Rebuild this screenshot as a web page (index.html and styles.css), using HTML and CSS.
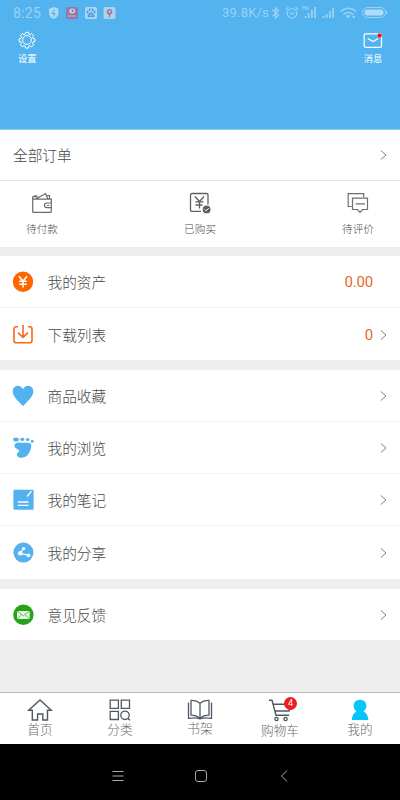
FILE: index.html
```
<!DOCTYPE html>
<html lang="zh-CN">
<head>
<meta charset="utf-8">
<meta name="viewport" content="width=device-width, initial-scale=1">
<title>我的</title>
<link rel="stylesheet" href="styles.css">
</head>
<body>
<svg class="defs" width="0" height="0"><symbol id="chevron" viewBox="0 0 7 10"><path d="M.8.5 6 5 .8 9.5" fill="none" stroke="#808080"/></symbol></svg>
<header class="hero">
  <div class="status">
    <span class="clock">8:25</span>
    <svg class="apps" width="68" height="14" viewBox="0 0 68 14">
      <path d="M5.700 1 10.500 2.800V7c0 3-2 5-4.800 6C2.900 12 1 10 1 7V2.800Z" fill="#a9d9f6"/>
      <path d="M6.600 3.500 4 7.500h3L5.300 10.500" stroke="#52a8df" fill="none"/>
      <rect x="18" y="1" width="12" height="12" rx="2" fill="#9378a8"/>
      <ellipse cx="24.200" cy="5" rx="3" ry="2.500" fill="#c3d5e8"/><circle cx="24.500" cy="4.700" r="1" fill="#765a8a"/><path d="M20 10h8" stroke="#c7acc9" stroke-width="1.500" stroke-dasharray="1.500 .5"/>
      <rect x="37" y="1" width="12" height="12" rx="2" fill="#a9d8f7"/>
      <g fill="#4b9be0"><ellipse cx="39.500" cy="6" rx="1" ry="1.400"/><ellipse cx="41.700" cy="3.800" rx="1" ry="1.400"/><ellipse cx="44.500" cy="3.800" rx="1" ry="1.400"/><ellipse cx="46.500" cy="6" rx="1" ry="1.400"/><path d="M43 6.200c1.300 0 3.700 2.400 3.500 4-.2 1.200-2 .9-3.500.9s-3.300.3-3.500-.9c-.2-1.600 2.200-4 3.500-4Z"/></g><path d="M41.500 9h3" stroke="#a9d8f7"/>
      <rect x="55.500" y="1" width="12" height="12" rx="2" fill="#add2ea"/>
      <circle cx="61.500" cy="5.700" r="2.800" fill="#97819f"/><circle cx="61.500" cy="5.500" r="1" fill="#c8d9e9"/><path d="M61.500 8v3.500" stroke="#97819f" stroke-width="1.200"/>
    </svg>
    <span class="speed">39.8K/s</span>
    <svg class="signals" width="119" height="16" viewBox="270 5 119 16" fill="none" stroke="#9ad2f6">
      <path d="m272.500 9.500 6 6-3 2.500V8l3 2.500-6 6" stroke-width="1.300"/>
      <circle cx="292" cy="13.300" r="4.800" stroke-width="1.200"/><path d="m286 9.500 2.500-2.500m9.500 2.500-2.500-2.500M290 12.200l2 2 2.500-2" stroke-width="1.200"/>
      <g stroke-width="1.800"><path d="M305.500 18v-2m3.200 2v-5m3.200 5v-8m3.200 8V7M323.500 18v-2m3.200 2v-4m3.200 4v-7m3.200 7V8"/></g>
      <text x="302" y="10" class="hd">HD</text>
      <path d="M340.500 11.500q7.800-6.500 15.500 0M343.300 14.500q5-4 10 0" stroke-width="1.600"/><path d="m345.500 15.800 2.500 2.700 2.500-2.700q-2.500-1.700-5 0Z" fill="#9ad2f6" stroke="none"/><circle cx="353.800" cy="17" r="1.300" fill="#9ad2f6" stroke="none"/>
      <rect x="362.500" y="7.500" width="23" height="10" rx="5"/><rect x="364.500" y="9.500" width="19" height="6" rx="3" fill="#b0dcfa" stroke="none"/><path d="M386.500 11v3"/>
    </svg>
  </div>
  <div class="actions">
    <a class="action">
      <svg width="18" height="18" viewBox="0 0 18 18" fill="none" stroke="#fff"><circle cx="9" cy="9" r="4.400"/><path d="M7.600 1.300h2.800l.4 1.900 1.200.5 1.700-1.100 1.900 1.900-1.100 1.700.5 1.200 1.900.4v2.800l-1.900.4-.5 1.200 1.100 1.700-1.900 1.900-1.700-1.100-1.200.5-.4 1.900H7.600l-.4-1.900-1.200-.5-1.700 1.100-1.900-1.900 1.100-1.700-.5-1.200-1.900-.4V7.800L3 7.400l.5-1.200-1.100-1.700 1.900-1.900L6 3.700l1.200-.5Z"/></svg>
      <span>设置</span>
    </a>
    <a class="action">
      <svg width="20" height="18" viewBox="0 0 20 18" fill="none" stroke="#fff" stroke-width="1.200"><rect x="1.200" y="2.800" width="17.300" height="13.500" rx="1.200"/><path d="m4.800 7.500 5.200 3 5.200-3"/><circle cx="16.700" cy="4.500" r="2.300" fill="#df101e" stroke="#edb5c5" stroke-width=".4"/></svg>
      <span>消息</span>
    </a>
  </div>
</header>
<main>
  <section class="orders">
    <a class="row all"><span class="label">全部订单</span><svg class="chev"><use href="#chevron"/></svg></a>
    <div class="states">
      <a class="state"><svg width="22" height="22" viewBox="0 0 22 22" fill="none" stroke="#696969" stroke-width="1.200"><path d="M20.300 11V7.200H1.700v12.200q0 1 1 1h16.600q1 0 1-1v-3.700M20.300 11h-4.600q-2.200 0-2.200 2.300t2.200 2.300h4.600ZM1.700 7.500V5l4-1.600M5 7l9.500-5.500L17 7M3.500 5h4M15.500 3.500h3V7"/><path d="M15.800 13.300h2.500" stroke-width="1"/></svg><span>待付款</span></a>
      <a class="state"><svg width="22" height="22" viewBox="0 0 22 22" fill="none" stroke="#606060" stroke-width="1.300"><path d="M12 19.400H3q-1.500 0-1.500-1.500V3Q1.500 1.500 3 1.500h14.500q1.500 0 1.500 1.500v9.500"/><path d="m6 4.500 4.500 5 4.500-5M10.500 9.500v7M6.500 9.800h8M6.500 13h7"/><circle cx="17.600" cy="17.400" r="3.900" fill="#606060" stroke="none"/><path d="m15.600 17.300 1.500 1.500 2.600-2.600" stroke="#fff" stroke-width="1"/></svg><span>已购买</span></a>
      <a class="state"><svg width="22" height="22" viewBox="0 0 22 22" fill="none" stroke="#707070" stroke-width="1.200"><path d="M4.700 14.500H1.200V1.600h15.500v3.700M5.500 6.200h15v11.300h-4.800L13 20.300l-2.700-2.800H5.500ZM8.500 11.800h9.500"/></svg><span>待评价</span></a>
    </div>
  </section>
  <section class="group assets">
    <a class="row"><svg class="icon" viewBox="0 0 22 22"><circle cx="11" cy="10.800" r="10.200" fill="#f60"/><path d="m7 5.300 4 5 4-5M11 10v6.500M7.300 10.300h7.400M7.300 13.300h7.400" stroke="#fff" stroke-width="1.600" fill="none"/></svg><span class="label">我的资产</span><span class="value">0.00</span><i class="chev"></i></a>
    <a class="row"><svg class="icon" viewBox="0 0 22 22" fill="none" stroke="#f26a1c" stroke-width="1.600"><path d="M6 2.800H4.200Q2 2.800 2 5v11.500q0 2.300 2.300 2.300h13.400q2.300 0 2.300-2.300V5q0-2.200-2.200-2.200H16M11 1v12M6 8.600l5 4.700 5-4.700"/></svg><span class="label">下载列表</span><span class="value">0</span><svg class="chev"><use href="#chevron"/></svg></a>
  </section>
  <section class="group library">
    <a class="row"><svg class="icon" viewBox="0 0 22 22"><path d="M11 21C7 17 .7 11.500.7 6.500.7 3 3 .7 5.700.7 8.200.7 10 2 11 4.200 12 2 13.800.7 16.300.7 19 .7 21.300 3 21.300 6.500 21.300 11.500 15 17 11 21Z" fill="#52b1ee"/></svg><span class="label">商品收藏</span><svg class="chev"><use href="#chevron"/></svg></a>
    <a class="row"><svg class="icon" viewBox="0 0 22 22" fill="#52b1ee"><ellipse cx="4" cy="2.500" rx="2.800" ry="2.100"/><ellipse cx="10.300" cy="2.300" rx="2.100" ry="1.600"/><ellipse cx="15.700" cy="2.600" rx="1.800" ry="1.500"/><ellipse cx="20.200" cy="4.400" rx="1.500" ry="1.300"/><path d="M2.500 8.500C3 5.800 5.500 5.300 8.500 5.700c3.500.5 7-.8 10 .6 1.500 2 .6 5.500-.8 8.500-1.700 3.700-4.500 6-8 6-3 0-5.300-1.600-4.800-3.800.4-1.600 3-2.200 2.300-3.500C6.300 11.800 2 11.500 2.500 8.500Z"/></svg><span class="label">我的浏览</span><svg class="chev"><use href="#chevron"/></svg></a>
    <a class="row"><svg class="icon" viewBox="0 0 22 22"><rect x="1.400" y=".8" width="20.200" height="20" rx="1" fill="#52b1ee"/><path d="m15.200 7.500 4.200-5.400M5.800 13H16.500M5.800 16.300H16.500" stroke="#fff" stroke-width="1.300" fill="none"/></svg><span class="label">我的笔记</span><svg class="chev"><use href="#chevron"/></svg></a>
    <a class="row"><svg class="icon" viewBox="0 0 22 22"><circle cx="11.400" cy="10.600" r="10" fill="#52b1ee"/><path d="m11.500 6-3 5.500 9 1.800" stroke="#fff" stroke-width="1.200" fill="none"/><g fill="#fff"><circle cx="11.700" cy="6.600" r="1.600"/><circle cx="8.300" cy="11.300" r="2.300"/><circle cx="16.500" cy="13.300" r="1.900"/></g></svg><span class="label">我的分享</span><svg class="chev"><use href="#chevron"/></svg></a>
  </section>
  <section class="group feedback">
    <a class="row"><svg class="icon" viewBox="0 0 22 22"><circle cx="11.400" cy="10.700" r="10.200" fill="#28a318"/><rect x="5" y="7" width="12.700" height="8" fill="#e8f8e5"/><path d="m5 7 6.300 4.800L17.700 7M5 15l4.500-4.300M17.700 15l-4.500-4.300" fill="none" stroke="#28a318" stroke-width=".7"/></svg><span class="label">意见反馈</span><svg class="chev"><use href="#chevron"/></svg></a>
  </section>
</main>
<nav class="tabs">
  <a class="tab"><svg width="26" height="24" viewBox="0 0 26 24" fill="none" stroke="#505862" stroke-width="1.400"><path d="M1.700 12.300 13 2l11.300 10.300H20.500V22h-4.700v-6h-5.200v6H5.300v-9.700Z"/></svg><span>首页</span></a>
  <a class="tab"><svg width="26" height="24" viewBox="0 0 26 24" fill="none" stroke="#505862" stroke-width="1.300"><path d="M3.200 2.200h8.200v8.200H3.200ZM14.300 2.200h8.200v8.200h-8.200ZM3.200 13.300h8.200v8.200H3.200Z"/><circle cx="18" cy="17.300" r="4.200"/><path d="m20.800 20.300 2.200 2"/></svg><span>分类</span></a>
  <a class="tab books"><svg width="26" height="24" viewBox="0 0 26 24" fill="none" stroke="#505862" stroke-width="1.300"><path d="M13 5.200Q9.500 2.200 4 2.500V17.200q5.500 0 9 3.300 3.500-3.300 9-3.300V2.500Q16.500 2.200 13 5.200ZM13 5.200v15.300M1.500 4.500v15.800q7-1.200 11.500.5 4.500-1.700 11.500-.5V4.500"/></svg><span>书架</span></a>
  <a class="tab cart"><svg width="26" height="24" viewBox="0 0 26 24" fill="none" stroke="#505862" stroke-width="1.400"><path d="M2 2.200h3L9 17.300h13.200M6 6.200h18L22 13H8"/><circle cx="9.500" cy="21" r="1.600"/><circle cx="18.500" cy="21" r="1.600"/></svg><b class="badge">4</b><span>购物车</span></a>
  <a class="tab"><svg width="26" height="24" viewBox="0 0 26 24" fill="#08c5f8"><path d="M13 1.700c4 0 6.400 2.800 6.400 6.200 0 2.600-1.500 4.400-3 5.600 3 1.300 4.600 4 5 8.500H4.800c.2-4.500 2-7.200 4.800-8.500-1.500-1.200-3-3-3-5.600 0-3.400 2.400-6.200 6.400-6.200Z"/></svg><span>我的</span></a>
</nav>
<footer class="system">
  <svg width="12" height="12" viewBox="0 0 12 12"><path d="M.5 1.500h11M.5 6h11M.5 10.500h11"/></svg>
  <svg width="14" height="14" viewBox="0 0 14 14"><rect x="1.500" y="1.500" width="11" height="11" rx="2.500"/></svg>
  <svg width="12" height="12" viewBox="0 0 12 12"><path d="M9 .5 3.500 6 9 11.500"/></svg>
</footer>
</body>
</html>
```
FILE: styles.css
```
* { box-sizing: border-box; }
body {
  margin: 0;
  width: 400px;
  height: 800px;
  display: flex;
  flex-direction: column;
  overflow: hidden;
  background: #eee;
  color: #484848;
  font-family: "Noto Sans CJK SC", sans-serif;
  font-weight: 300;
}
svg { display: block; flex: none; }
.defs { position: absolute; }
.hero { height: 130px; background: #52b3ef; border-bottom: 1px solid #8bcdf5; }
.status { display: flex; align-items: center; height: 25px; padding: 0 11px 0 13px; color: #9ad2f6; font-family: Roboto, sans-serif; font-weight: 400; }
.clock { width: 35px; font-size: 14px; letter-spacing: .3px; }
.speed { margin-left: auto; width: 48px; font-size: 13px; letter-spacing: .2px; white-space: nowrap; }
.signals { overflow: visible; }
.hd { font-size: 5px; font-family: Roboto, sans-serif; fill: #b0dcfa; stroke: none; }
.actions { display: flex; justify-content: space-between; padding: 6px 17px 0 18px; color: #fff; font-size: 9.3px; }
.action { display: flex; flex-direction: column; align-items: center; gap: 2px; line-height: 14px; font-weight: 400; }
.orders { background: #fff; height: 117px; }
.row { display: flex; align-items: center; height: 52px; padding: 1px 13px 0 12px; border-bottom: 1px solid #f2f2f2; background: #fff; }
.all { height: 51px; padding-top: 0; padding-left: 13px; border-bottom-color: #e5e5e5; }
.label { flex: 1; font-size: 14.67px; line-height: 22px; }
.icon { width: 22px; height: 22px; margin-right: 13.5px; }
.chev { width: 7px; height: 10px; flex: none; }
.states { display: flex; justify-content: space-between; padding: 11px 26px 0; }
.state { display: flex; flex-direction: column; align-items: center; gap: 7px; font-size: 10.67px; line-height: 16px; }
.group { margin-top: 10px; }
.group .row:last-child { border-bottom: 0; }
.library .row { height: 52.15px; }
.feedback .row { height: 51.4px; }
.assets { margin-top: 9px; }
.value { margin-right: 7px; color: #e9682c; font: 400 15px/22px Roboto, sans-serif; letter-spacing: -.2px; }
.tabs { display: flex; height: 52px; margin-top: auto; background: #fff; border-top: 1px solid #b9b9b9; }
.tab { position: relative; display: flex; flex: 1; flex-direction: column; align-items: center; padding-top: 5px; font-size: 12.7px; line-height: 14px; color: #686868; }
.cart { line-height: 15px; }
.books { line-height: 12px; }
.badge { position: absolute; left: 44px; top: 4px; width: 13px; height: 13px; border-radius: 50%; background: #ee1b20; color: #fff; font: 400 9px/13px Roboto, sans-serif; text-align: center; }
.system { display: flex; align-items: center; justify-content: space-between; height: 56px; padding: 8px 110px 0 112px; background: #000; }
.system svg { fill: none; stroke: #aaa; stroke-width: 1; }
```
